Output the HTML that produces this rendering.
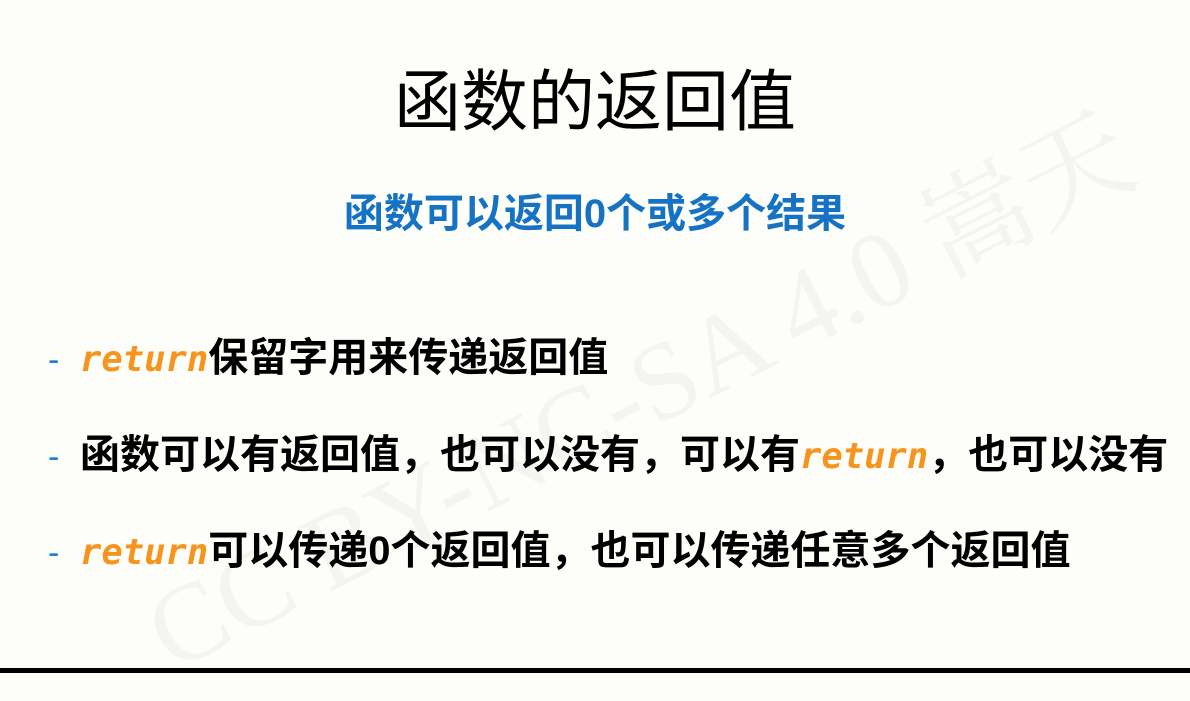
<!DOCTYPE html>
<html><head><meta charset="utf-8"><style>
html,body{margin:0;padding:0;}
body{width:1190px;height:673px;background:#fdfdf9;position:relative;overflow:hidden;font-family:"Liberation Sans","Noto Sans CJK SC",sans-serif;}
.t{position:absolute;left:0;width:1190px;text-align:center;}
#title{top:58px;font-size:67px;line-height:90px;color:#000;}
#sub{top:188px;font-size:40px;line-height:52px;color:#1673c4;font-weight:bold;}
.b{position:absolute;left:48px;font-size:40px;line-height:50px;font-weight:bold;color:#000;white-space:nowrap;}
.d{color:#1b7fd6;font-weight:normal;font-size:34px;display:inline-block;width:32px;}
.r{color:#f7941d;font-family:"DejaVu Sans Mono","Liberation Mono",monospace;font-style:italic;font-weight:bold;font-size:35.5px;}
#wm{position:absolute;left:115px;top:560px;font-size:110px;color:#f4f4f0;font-family:"Liberation Serif","Noto Serif CJK SC",serif;transform:rotate(-27deg);transform-origin:left top;white-space:nowrap;}
#bar{position:absolute;left:0;top:668px;width:1190px;height:5px;background:#000;}
</style></head><body>
<div id="wm">CC BY-NC-SA 4.0 嵩天</div>
<div class="t" id="title">函数的返回值</div>
<div class="t" id="sub">函数可以返回0个或多个结果</div>
<div class="b" style="top:333px"><span class="d">-</span><span class="r">return</span>保留字用来传递返回值</div>
<div class="b" style="top:430px"><span class="d">-</span>函数可以有返回值，也可以没有，可以有<span class="r">return</span>，也可以没有</div>
<div class="b" style="top:526px"><span class="d">-</span><span class="r">return</span>可以传递0个返回值，也可以传递任意多个返回值</div>
<div id="bar"></div>
</body></html>
